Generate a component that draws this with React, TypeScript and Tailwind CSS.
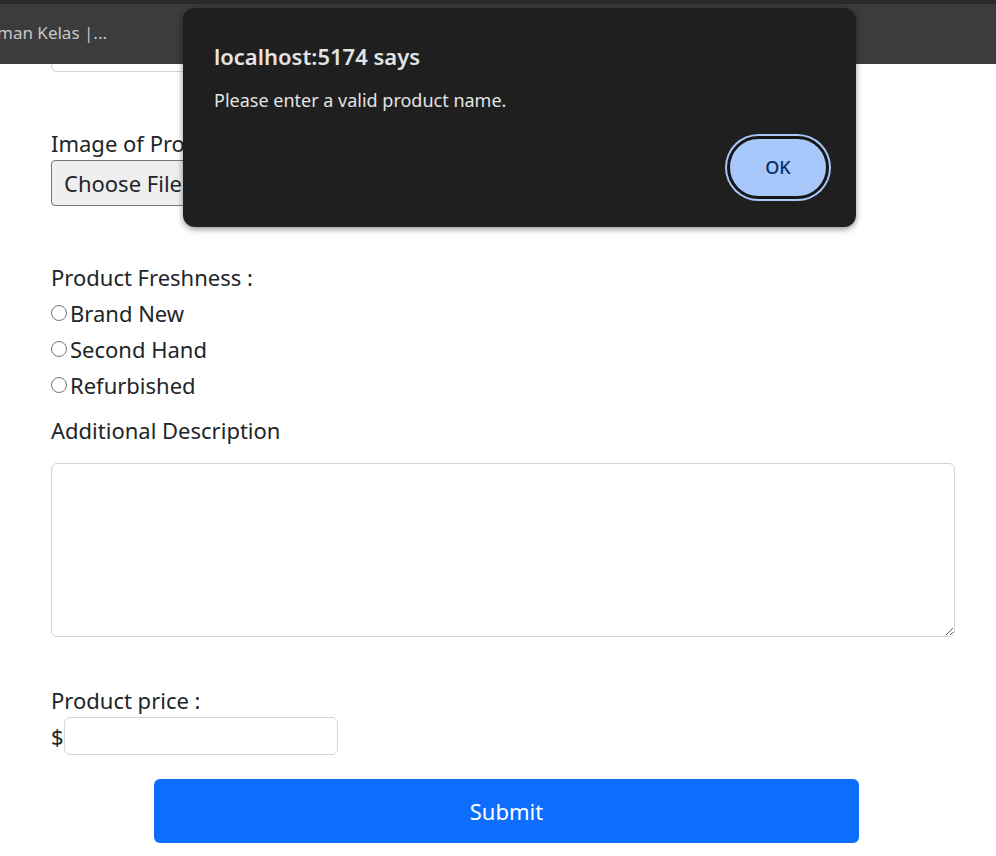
import React from "react";

const font = { fontFamily: '"Noto Sans", "Open Sans", sans-serif' };

const Radio = ({ label }: { label: string }) => (
  <label className="flex h-9 items-center">
    <span className="mr-[3px] h-[16px] w-[16px] shrink-0 rounded-full border border-[#767676] bg-white" />
    <span>{label}</span>
  </label>
);

const AlertDialog = () => (
  <div className="absolute left-[183px] top-[8px] h-[219px] w-[673px] rounded-[12px] bg-[#1f1f1f] shadow-[0_2px_6px_rgba(0,0,0,0.45)]">
    <div className="px-[31px] pt-[32px]">
      <p className="text-[22px] font-semibold leading-[32px] text-[#e3e3e3]">localhost:5174 says</p>
      <p className="mt-[16px] text-[18px] leading-[24px] text-[#e3e3e3]">
        Please enter a valid product name.
      </p>
    </div>
    <div className="mt-[24px] flex justify-end pr-[27px]">
      <button className="flex h-[63px] w-[102px] items-center justify-center rounded-full border-[3px] border-[#161616] bg-[#a8c7fa] text-[18px] font-medium text-[#062e6f] ring-2 ring-[#a8c7fa]">
        OK
      </button>
    </div>
  </div>
);

export default function App() {
  return (
    <div className="relative h-[856px] w-[996px] overflow-hidden bg-white text-[22px] text-[#212529]" style={font}>
      {/* browser tab strip */}
      <div className="h-[4px] bg-[#2a2a2a]" />
      <div className="flex h-[60px] items-center bg-[#3c3c3c] pb-[2px] text-[17px] text-[#c7c7c7]">
        <span className="-ml-[3px]">man Kelas |...</span>
      </div>

      <div className="pl-[51px] pr-[41px]">
        {/* tail of the product name input, scrolled under the tab strip */}
        <div className="h-[8px] w-[700px] rounded-b-[6px] border-x border-b border-[#ced4da]" />

        <div className="mt-[56px]">
          <p className="leading-[30px]">Image of Product :</p>
          <div className="mt-[2px] flex items-center">
            <button className="h-[46px] rounded-[4px] border border-[#767676] bg-[#efefef] px-[12px] text-[22px]">
              Choose File
            </button>
            <span className="ml-[6px]">No file chosen</span>
          </div>
        </div>

        <div className="mt-[56px]">
          <p className="leading-[30px]">Product Freshness :</p>
          <div className="mt-[3px]">
            <Radio label="Brand New" />
            <Radio label="Second Hand" />
            <Radio label="Refurbished" />
          </div>
        </div>

        <p className="mt-[12px] leading-[30px]">Additional Description</p>
        <textarea className="mt-[18px] block h-[174px] w-full rounded-[6px] border border-[#ced4da] bg-white" />

        <p className="mt-[48px] leading-[30px]">Product price :</p>
        <div className="mt-[2px] flex items-center">
          <span>$</span>
          <input className="h-[38px] w-[274px] rounded-[6px] border border-[#ced4da]" />
        </div>

        <div className="mt-[24px] pl-[103px]">
          <button className="h-[64px] w-[705px] rounded-[6px] bg-[#0d6efd] text-[22px] text-white">Submit</button>
        </div>
      </div>

      <AlertDialog />
    </div>
  );
}
